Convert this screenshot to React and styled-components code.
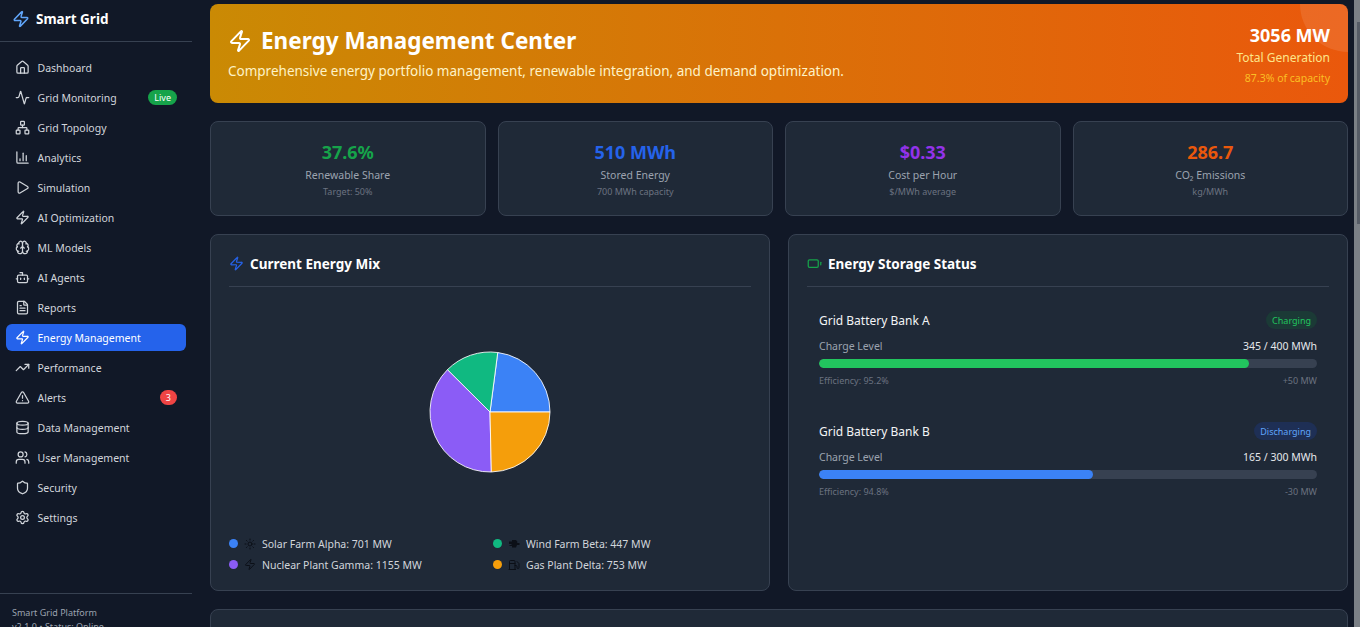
import React from "react";
import styled, { createGlobalStyle } from "styled-components";
import {
  Activity,
  Battery,
  Bot,
  Brain,
  ChartColumn,
  Database,
  FileText,
  Fuel,
  House,
  Network,
  Play,
  Settings,
  Shield,
  Sun,
  TrendingUp,
  TriangleAlert,
  Users,
  Zap,
} from "lucide-react";

// lucide's Wind is three thin lines, the picture has a filled puff
const WindPuff = () => (
  <svg width="12" height="12" viewBox="0 0 24 24" fill="currentColor">
    <path d="M2 7h6V4h8l3 4-1 2h5v4h-5l-2 5H8v-3H3v-2h4v-2H2z" />
  </svg>
);

const navItems = [
  { label: "Dashboard", icon: House },
  { label: "Grid Monitoring", icon: Activity, badge: "Live", tone: "#16a34a" },
  { label: "Grid Topology", icon: Network },
  { label: "Analytics", icon: ChartColumn },
  { label: "Simulation", icon: Play },
  { label: "AI Optimization", icon: Zap },
  { label: "ML Models", icon: Brain },
  { label: "AI Agents", icon: Bot },
  { label: "Reports", icon: FileText },
  { label: "Energy Management", icon: Zap, active: true },
  { label: "Performance", icon: TrendingUp },
  { label: "Alerts", icon: TriangleAlert, badge: "3", tone: "#ef4444" },
  { label: "Data Management", icon: Database },
  { label: "User Management", icon: Users },
  { label: "Security", icon: Shield },
  { label: "Settings", icon: Settings },
];

const stats = [
  { value: "37.6%", label: "Renewable Share", note: "Target: 50%", color: "#16a34a" },
  { value: "510 MWh", label: "Stored Energy", note: "700 MWh capacity", color: "#2563eb" },
  { value: "$0.33", label: "Cost per Hour", note: "$/MWh average", color: "#9333ea" },
  { value: "286.7", label: "CO₂ Emissions", note: "kg/MWh", color: "#ea580c" },
];

const sources = [
  { name: "Solar Farm Alpha", mw: 701, color: "#3b82f6", icon: <Sun size={12} /> },
  { name: "Wind Farm Beta", mw: 447, color: "#10b981", icon: <WindPuff /> },
  { name: "Nuclear Plant Gamma", mw: 1155, color: "#8b5cf6", icon: <Zap size={13} /> },
  { name: "Gas Plant Delta", mw: 753, color: "#f59e0b", icon: <Fuel size={14} /> },
];

const batteries = [
  {
    name: "Grid Battery Bank A",
    status: "Charging",
    statusBg: "#1b3a36",
    statusFg: "#22c55e",
    stored: 345,
    capacity: 400,
    efficiency: "95.2%",
    flow: "+50 MW",
    fill: "#22c55e",
  },
  {
    name: "Grid Battery Bank B",
    status: "Discharging",
    statusBg: "#1e2f55",
    statusFg: "#60a5fa",
    stored: 165,
    capacity: 300,
    efficiency: "94.8%",
    flow: "-30 MW",
    fill: "#3b82f6",
  },
];

// slices run counter-clockwise from 3 o'clock
const slicePaths = () => {
  const total = sources.reduce((sum, s) => sum + s.mw, 0);
  let angle = 0;
  return sources.map((s) => {
    const start = angle;
    angle += (s.mw / total) * Math.PI * 2;
    const x1 = 60 + 60 * Math.cos(start);
    const y1 = 60 - 60 * Math.sin(start);
    const x2 = 60 + 60 * Math.cos(angle);
    const y2 = 60 - 60 * Math.sin(angle);
    return { color: s.color, d: `M60 60L${x1} ${y1}A60 60 0 0 0 ${x2} ${y2}Z` };
  });
};

const App = () => {
  return (
    <>
      <GlobalStyle />
      <Shell>
        <Sidebar>
          <Brand>
            <Zap size={18} color="#60a5fa" />
            <span>Smart Grid</span>
          </Brand>
          <Nav>
            {navItems.map((item) => (
              <NavItem key={item.label} $active={item.active}>
                <item.icon size={15} />
                <span>{item.label}</span>
                {item.badge && <NavBadge $tone={item.tone}>{item.badge}</NavBadge>}
              </NavItem>
            ))}
          </Nav>
          <SidebarFooter>
            <div>Smart Grid Platform</div>
            <div>v2.1.0 • Status: Online</div>
          </SidebarFooter>
        </Sidebar>

        <Main>
          <Hero>
            <HeroText>
              <HeroTitle>
                <Zap size={24} />
                Energy Management Center
              </HeroTitle>
              <HeroSub>
                Comprehensive energy portfolio management, renewable integration, and demand
                optimization.
              </HeroSub>
            </HeroText>
            <HeroTotal>
              <strong>3056 MW</strong>
              <span>Total Generation</span>
              <small>87.3% of capacity</small>
            </HeroTotal>
            <HeroCircle />
          </Hero>

          <StatGrid>
            {stats.map((s) => (
              <StatCard key={s.label}>
                <StatValue $color={s.color}>{s.value}</StatValue>
                <StatLabel>{s.label}</StatLabel>
                <StatNote>{s.note}</StatNote>
              </StatCard>
            ))}
          </StatGrid>

          <PanelRow>
            <Panel>
              <PanelHead>
                <Zap size={15} color="#2563eb" />
                Current Energy Mix
              </PanelHead>
              <ChartArea>
                <svg width="122" height="122" viewBox="-1 -1 122 122">
                  {slicePaths().map((p) => (
                    <path
                      key={p.color}
                      d={p.d}
                      fill={p.color}
                      stroke="#fff"
                      strokeOpacity="0.85"
                      strokeWidth="1"
                    />
                  ))}
                </svg>
              </ChartArea>
              <Legend>
                {sources.map((s) => (
                  <LegendItem key={s.name}>
                    <LegendDot $color={s.color} />
                    <LegendIcon>{s.icon}</LegendIcon>
                    <span>
                      {s.name}: {s.mw} MW
                    </span>
                  </LegendItem>
                ))}
              </Legend>
            </Panel>

            <Panel>
              <PanelHead>
                <Battery size={15} color="#16a34a" />
                Energy Storage Status
              </PanelHead>
              <BatteryList>
                {batteries.map((b) => (
                  <BatteryItem key={b.name}>
                    <BatteryTop>
                      <BatteryName>{b.name}</BatteryName>
                      <StatusPill $bg={b.statusBg} $fg={b.statusFg}>
                        {b.status}
                      </StatusPill>
                    </BatteryTop>
                    <ChargeRow>
                      <span>Charge Level</span>
                      <b>
                        {b.stored} / {b.capacity} MWh
                      </b>
                    </ChargeRow>
                    <Bar>
                      <BarFill
                        $color={b.fill}
                        style={{ width: `${(b.stored / b.capacity) * 100}%` }}
                      />
                    </Bar>
                    <BatteryFoot>
                      <span>Efficiency: {b.efficiency}</span>
                      <span>{b.flow}</span>
                    </BatteryFoot>
                  </BatteryItem>
                ))}
              </BatteryList>
            </Panel>
          </PanelRow>

          <LowerPanel />
        </Main>

        <ScrollTrack>
          <ScrollThumb />
        </ScrollTrack>
      </Shell>
    </>
  );
};

export default App;

const GlobalStyle = createGlobalStyle`
  * {
    box-sizing: border-box;
  }
  html, body {
    margin: 0;
    height: 100%;
    overflow: hidden;
    background: #111827;
    font-family: "Noto Sans", sans-serif;
  }
`;

const Shell = styled.div`
  display: flex;
  height: 100vh;
  overflow: hidden;
`;

const Sidebar = styled.aside`
  display: flex;
  flex-direction: column;
  flex: 0 0 192px;
  height: 100vh;
  overflow: hidden;
  background: #111827;
`;

const Brand = styled.div`
  display: flex;
  align-items: center;
  gap: 6px;
  height: 42px;
  padding: 0 0 4px 12px;
  border-bottom: 1px solid #374151;
  color: #fff;
  font-size: 13.5px;
  font-weight: 700;
`;

const Nav = styled.nav`
  display: flex;
  flex: 1;
  flex-direction: column;
  gap: 3px;
  padding: 12px 6px 0;
`;

const NavItem = styled.div`
  display: flex;
  align-items: center;
  gap: 7.5px;
  height: 27px;
  padding: 0 9px;
  border-radius: 6px;
  font-size: 10.5px;
  color: ${(p) => (p.$active ? "#fff" : "#d1d5db")};
  background: ${(p) => (p.$active ? "#2563eb" : "transparent")};
`;

const NavBadge = styled.span`
  display: flex;
  align-items: center;
  justify-content: center;
  min-width: 17px;
  height: 15px;
  margin-left: auto;
  padding: 0 6px;
  border-radius: 999px;
  background: ${(p) => p.$tone};
  color: #fff;
  font-size: 9px;
`;

const SidebarFooter = styled.div`
  flex: 0 0 34px;
  min-height: 0;
  padding: 12px 12px 0;
  border-top: 1px solid #374151;
  color: #9ca3af;
  font-size: 9px;
  line-height: 14px;
`;

const Main = styled.main`
  flex: 1;
  height: 100vh;
  overflow: hidden;
  padding: 4px 12px 0 18px;
`;

const Hero = styled.section`
  position: relative;
  display: flex;
  align-items: center;
  justify-content: space-between;
  height: 99px;
  padding: 0 18px;
  overflow: hidden;
  border-radius: 8px;
  background: linear-gradient(90deg, #ca8a04, #ea580c);
  color: #fff;
`;

const HeroText = styled.div`
  display: flex;
  flex-direction: column;
  gap: 4px;
  padding-bottom: 2px;
`;

const HeroTitle = styled.h1`
  display: flex;
  align-items: center;
  gap: 9px;
  margin: 0;
  font-size: 22.5px;
  font-weight: 700;
  line-height: 32px;
`;

const HeroSub = styled.p`
  margin: 0;
  color: #fef3c7;
  font-size: 13.5px;
  line-height: 20px;
`;

const HeroTotal = styled.div`
  position: relative;
  z-index: 1;
  display: flex;
  flex-direction: column;
  align-items: flex-end;

  strong {
    font-size: 18px;
    font-weight: 700;
    line-height: 28px;
  }
  span {
    color: #fde68a;
    font-size: 12px;
    line-height: 18px;
  }
  small {
    margin-top: 3px;
    color: #fbbf24;
    font-size: 10.5px;
    line-height: 16px;
  }
`;

const HeroCircle = styled.div`
  position: absolute;
  top: -48px;
  right: -48px;
  width: 96px;
  height: 96px;
  border-radius: 50%;
  background: rgba(255, 255, 255, 0.1);
`;

const StatGrid = styled.div`
  display: grid;
  grid-template-columns: repeat(4, 1fr);
  gap: 12px;
  margin-top: 18px;
`;

const StatCard = styled.div`
  display: flex;
  flex-direction: column;
  align-items: center;
  height: 95px;
  padding-top: 17px;
  border: 1px solid #374151;
  border-radius: 8px;
  background: #1f2937;
`;

const StatValue = styled.div`
  color: ${(p) => p.$color};
  font-size: 18px;
  font-weight: 700;
  line-height: 26px;
`;

const StatLabel = styled.div`
  margin-top: 2px;
  color: #9ca3af;
  font-size: 10.5px;
  line-height: 16px;
`;

const StatNote = styled.div`
  margin-top: 2px;
  color: #6b7280;
  font-size: 9px;
  line-height: 14px;
`;

const PanelRow = styled.div`
  display: grid;
  grid-template-columns: 1fr 1fr;
  gap: 18px;
  margin-top: 18px;
`;

const Panel = styled.section`
  display: flex;
  flex-direction: column;
  height: 357px;
  padding: 18px;
  border: 1px solid #374151;
  border-radius: 8px;
  background: #1f2937;
`;

const PanelHead = styled.h2`
  display: flex;
  align-items: center;
  gap: 6px;
  height: 34px;
  margin: 0;
  padding-bottom: 12px;
  border-bottom: 1px solid #374151;
  color: #fff;
  font-size: 13.5px;
  font-weight: 700;
`;

const ChartArea = styled.div`
  display: flex;
  flex: 1;
  align-items: center;
  justify-content: center;
`;

const Legend = styled.div`
  display: grid;
  grid-template-columns: 1fr 1fr;
  gap: 6px;
`;

const LegendItem = styled.div`
  display: flex;
  align-items: center;
  gap: 6px;
  height: 15px;
  color: #d1d5db;
  font-size: 10.5px;
`;

const LegendDot = styled.i`
  width: 9px;
  height: 9px;
  border-radius: 50%;
  background: ${(p) => p.$color};
`;

const LegendIcon = styled.span`
  display: flex;
  align-items: center;
  justify-content: center;
  width: 12px;
  color: #0b0f17;
`;

const BatteryList = styled.div`
  display: flex;
  flex-direction: column;
  gap: 10px;
  padding-top: 12px;
`;

const BatteryItem = styled.div`
  padding: 12px;
`;

const BatteryTop = styled.div`
  display: flex;
  align-items: center;
  justify-content: space-between;
  height: 18px;
`;

const BatteryName = styled.div`
  color: #f3f4f6;
  font-size: 12px;
`;

const StatusPill = styled.span`
  display: flex;
  align-items: center;
  height: 18px;
  padding: 0 6px;
  border-radius: 999px;
  background: ${(p) => p.$bg};
  color: ${(p) => p.$fg};
  font-size: 9px;
`;

const ChargeRow = styled.div`
  display: flex;
  justify-content: space-between;
  margin-top: 10px;
  color: #9ca3af;
  font-size: 10.5px;
  line-height: 15px;

  b {
    color: #e5e7eb;
    font-weight: 400;
  }
`;

const Bar = styled.div`
  height: 9px;
  margin-top: 5px;
  overflow: hidden;
  border-radius: 999px;
  background: #374151;
`;

const BarFill = styled.div`
  height: 100%;
  border-radius: 999px;
  background: ${(p) => p.$color};
`;

const BatteryFoot = styled.div`
  display: flex;
  justify-content: space-between;
  margin-top: 6px;
  color: #6b7280;
  font-size: 9px;
  line-height: 14px;
`;

const LowerPanel = styled.section`
  height: 300px;
  margin-top: 18px;
  border: 1px solid #374151;
  border-radius: 8px;
  background: #1f2937;
`;

const ScrollTrack = styled.div`
  position: fixed;
  top: 0;
  right: 0;
  width: 6px;
  height: 100vh;
  padding: 22px 0 0 3px;
  background: #7b8086;
`;

const ScrollThumb = styled.div`
  height: 202px;
  background: #565c66;
`;
